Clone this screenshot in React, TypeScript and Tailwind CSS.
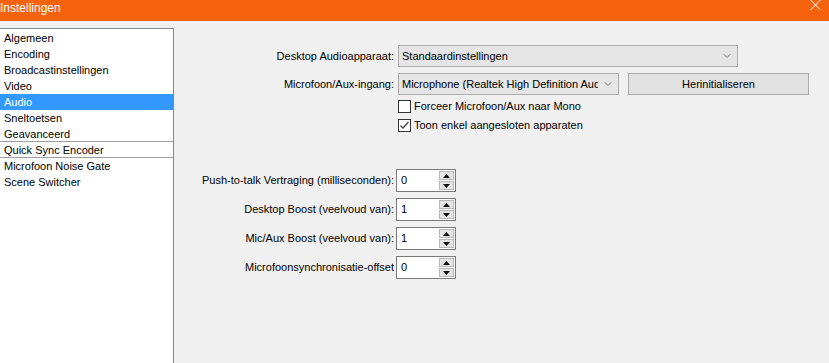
import { ChevronDown } from 'lucide-react';

const font = { fontFamily: '"Liberation Sans", Arial, sans-serif' };

const menu = [
  { label: 'Algemeen' },
  { label: 'Encoding' },
  { label: 'Broadcastinstellingen' },
  { label: 'Video' },
  { label: 'Audio', active: true },
  { label: 'Sneltoetsen' },
  { label: 'Geavanceerd', sep: true },
  { label: 'Quick Sync Encoder', sep: true },
  { label: 'Microfoon Noise Gate' },
  { label: 'Scene Switcher' },
];

const spins = [
  { label: 'Push-to-talk Vertraging (milliseconden):', value: '0' },
  { label: 'Desktop Boost (veelvoud van):', value: '1' },
  { label: 'Mic/Aux Boost (veelvoud van):', value: '1' },
  { label: 'Microfoonsynchronisatie-offset', value: '0' },
];

function Select({ text, width }: { text: string; width: string }) {
  return (
    <div className={`${width} h-[22px] flex items-center border border-[#adadad] bg-[#e5e5e5] pl-[3px] pr-[4px]`}>
      <span className="flex-1 overflow-hidden whitespace-nowrap text-black">{text}</span>
      <ChevronDown className="w-[12px] h-[12px] text-[#555] ml-[4px] shrink-0" strokeWidth={1.5} />
    </div>
  );
}

function Check({ checked, label }: { checked?: boolean; label: string }) {
  return (
    <div className="flex items-center h-[19px]">
      <div className="w-[13px] h-[13px] border border-[#333] bg-white flex items-center justify-center mr-[3px]">
        {checked && (
          <svg width="11" height="11" viewBox="0 0 11 11">
            <path d="M1.5 5.5 L4 8 L9.5 2" stroke="#444" strokeWidth="1.3" fill="none" />
          </svg>
        )}
      </div>
      <span>{label}</span>
    </div>
  );
}

function Spin({ value }: { value: string }) {
  return (
    <div className="w-[60px] h-[23px] flex items-center border border-[#7a7a7a] bg-white pl-[4px] pr-[1px]">
      <span className="flex-1 text-black">{value}</span>
      <div className="flex flex-col gap-[1px] w-[15px]">
        <div className="h-[9px] bg-[#e5e5e5] border border-[#b8b8b8] flex items-center justify-center">
          <svg width="7" height="4" viewBox="0 0 7 4"><path d="M0 4 L3.5 0 L7 4 Z" fill="#111" /></svg>
        </div>
        <div className="h-[9px] bg-[#e5e5e5] border border-[#b8b8b8] flex items-center justify-center">
          <svg width="7" height="4" viewBox="0 0 7 4"><path d="M0 0 L3.5 4 L7 0 Z" fill="#111" /></svg>
        </div>
      </div>
    </div>
  );
}

export default function App() {
  return (
    <div className="w-[829px] h-[363px] flex flex-col bg-[#f0f0f0] text-[11px] text-black overflow-hidden" style={font}>
      {/* Title bar */}
      <div className="h-[21px] bg-[#f7630c] flex items-start justify-between text-white text-[12px] shrink-0">
        <span className="leading-[14px] pt-[1px]">Instellingen</span>
        <svg width="11" height="10" viewBox="0 0 11 10" className="mr-[8px]">
          <path d="M0.5 0 L10.5 10 M10.5 0 L0.5 10" stroke="#fff" strokeWidth="1" />
        </svg>
      </div>

      <div className="flex flex-1 pt-[7px]">
        {/* Sidebar */}
        <div className="w-[174px] bg-white border-t border-r border-[#828790] pt-[1px] shrink-0">
          {menu.map((m) => (
            <div
              key={m.label}
              className={`h-[16px] leading-[16px] pl-[4px] ${m.active ? 'bg-[#3399ff] text-white' : ''} ${m.sep ? 'border-b border-[#a0a0a0]' : ''}`}
            >
              {m.label}
            </div>
          ))}
        </div>

        {/* Content */}
        <div className="flex-1 flex flex-col">
          <div className="grid grid-cols-[220px_auto] gap-x-[4px] mt-[17px] items-center">
            <span className="text-right">Desktop Audioapparaat:</span>
            <Select text="Standaardinstellingen" width="w-[340px]" />

            <span className="text-right mt-[6px]">Microfoon/Aux-ingang:</span>
            <div className="flex items-center gap-[9px] mt-[6px]">
              <Select text="Microphone (Realtek High Definition Audio)" width="w-[221px]" />
              <div className="w-[181px] h-[22px] border border-[#adadad] bg-[#e1e1e1] flex items-center justify-center">
                Herinitialiseren
              </div>
            </div>

            <span />
            <div className="flex flex-col mt-[2px]">
              <Check label="Forceer Microfoon/Aux naar Mono" />
              <Check checked label="Toon enkel aangesloten apparaten" />
            </div>
          </div>

          <div className="grid grid-cols-[220px_auto] gap-x-[2px] gap-y-[6px] mt-[34px] items-center">
            {spins.map((s) => (
              <>
                <span key={s.label + 'l'} className="text-right whitespace-nowrap">{s.label}</span>
                <Spin key={s.label + 'v'} value={s.value} />
              </>
            ))}
          </div>
        </div>
      </div>
    </div>
  );
}
